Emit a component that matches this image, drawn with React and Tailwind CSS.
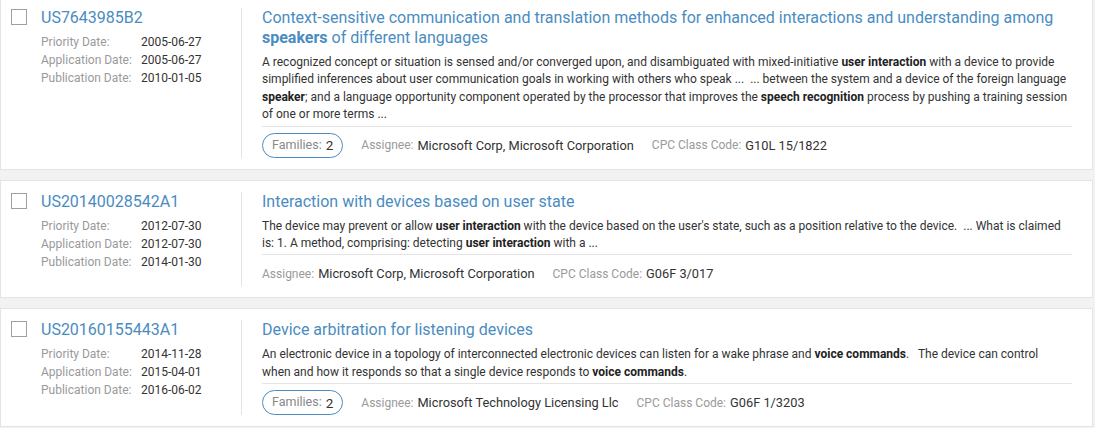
import React from "react";

const patents = [
  {
    id: "US7643985B2",
    priority: "2005-06-27",
    application: "2005-06-27",
    publication: "2010-01-05",
    title: [
      "Context-sensitive communication and translation methods for enhanced interactions and understanding among ",
      { b: "speakers" },
      " of different languages",
    ],
    abstract: [
      "A recognized concept or situation is sensed and/or converged upon, and disambiguated with mixed-initiative ",
      { b: "user interaction" },
      " with a device to provide simplified inferences about user communication goals in working with others who speak ...  ... between the system and a device of the foreign language ",
      { b: "speaker" },
      "; and a language opportunity component operated by the processor that improves the ",
      { b: "speech recognition" },
      " process by pushing a training session of one or more terms ...",
    ],
    families: 2,
    assignee: "Microsoft Corp, Microsoft Corporation",
    cpc: "G10L 15/1822",
  },
  {
    id: "US20140028542A1",
    priority: "2012-07-30",
    application: "2012-07-30",
    publication: "2014-01-30",
    title: ["Interaction with devices based on user state"],
    abstract: [
      "The device may prevent or allow ",
      { b: "user interaction" },
      " with the device based on the user's state, such as a position relative to the device.  ... What is claimed is: 1. A method, comprising: detecting ",
      { b: "user interaction" },
      " with a ...",
    ],
    families: null,
    assignee: "Microsoft Corp, Microsoft Corporation",
    cpc: "G06F 3/017",
  },
  {
    id: "US20160155443A1",
    priority: "2014-11-28",
    application: "2015-04-01",
    publication: "2016-06-02",
    title: ["Device arbitration for listening devices"],
    abstract: [
      "An electronic device in a topology of interconnected electronic devices can listen for a wake phrase and ",
      { b: "voice commands" },
      ".   The device can control\nwhen and how it responds so that a single device responds to ",
      { b: "voice commands" },
      ".",
    ],
    families: 2,
    assignee: "Microsoft Technology Licensing Llc",
    cpc: "G06F 1/3203",
  },
];

const Rich = ({ parts, boldClass }) =>
  parts.map((p, i) =>
    typeof p === "string" ? (
      <React.Fragment key={i}>{p}</React.Fragment>
    ) : (
      <span key={i} className={boldClass}>
        {p.b}
      </span>
    )
  );

const DateRow = ({ label, value }) => (
  <div className="flex h-[18px] items-center">
    <span className="w-[100px] text-[12px] text-[#9a9a9a]">{label}</span>
    <span className="text-[12px] text-[#333]">{value}</span>
  </div>
);

const PatentCard = ({ p }) => (
  <div className="flex border border-[#e4e4e4] bg-white pt-[11px] pb-[11px]">
    <div className="flex w-[240px] shrink-0 pl-[10px]">
      <div className="mt-[1px] h-[16px] w-[16px] border border-[#a0a0a0] bg-white" />
      <div className="ml-[14px] flex flex-col">
        <a className="text-[16px] leading-[20px] text-[#4a8cc1]">{p.id}</a>
        <div className="mt-[5px] flex flex-col">
          <DateRow label="Priority Date:" value={p.priority} />
          <DateRow label="Application Date:" value={p.application} />
          <DateRow label="Publication Date:" value={p.publication} />
        </div>
      </div>
    </div>
    <div className="flex-1 border-l border-[#e4e4e4] pl-[20px] pr-[20px]">
      <h3 className="text-[16px] leading-[20px] text-[#4a8cc1]">
        <Rich parts={p.title} boldClass="font-bold" />
      </h3>
      <p className="mt-[6px] whitespace-pre-wrap text-[12px] leading-[17.4px] text-[#333]">
        <Rich parts={p.abstract} boldClass="font-bold text-[#222]" />
      </p>
      <div className="mt-[2px] flex h-[32px] items-end gap-[18px] border-t border-[#e4e4e4]">
        {p.families && (
          <span className="flex h-[25px] items-center rounded-full border border-[#4a8cc1] px-[9px] text-[12.5px]">
            <span className="text-[#888]">Families:</span>
            <span className="ml-1 text-[13.5px] text-[#333]">{p.families}</span>
          </span>
        )}
        <span className="flex h-[25px] items-center">
          <span className="text-[12px] text-[#9a9a9a]">Assignee:</span>
          <span className="ml-1 text-[12.8px] text-[#333]">{p.assignee}</span>
        </span>
        <span className="flex h-[25px] items-center">
          <span className="text-[12px] text-[#9a9a9a]">CPC Class Code:</span>
          <span className="ml-1 text-[12.8px] text-[#333]">{p.cpc}</span>
        </span>
      </div>
    </div>
  </div>
);

export default function App() {
  return (
    <div
      className="h-[428px] overflow-hidden bg-[#f2f2f2] pr-[2px]"
      style={{ fontFamily: "Roboto, 'Liberation Sans', sans-serif" }}
    >
      <div className="-mt-[4px] flex flex-col gap-[10px]">
        {patents.map((p) => (
          <PatentCard key={p.id} p={p} />
        ))}
      </div>
    </div>
  );
}
